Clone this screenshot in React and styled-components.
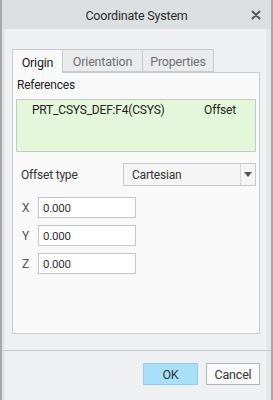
import React from "react";
import styled, { createGlobalStyle } from "styled-components";

const Global = createGlobalStyle`
  html, body { margin: 0; padding: 0; background: #eef0f1; }
  body { font-family: Roboto, "Open Sans", sans-serif; font-size: 12px; letter-spacing: -0.2px; color: #222; }
  * { box-sizing: border-box; }
`;

const Frame = styled.div`
  width: 273px;
  height: 400px;
  display: flex;
  flex-direction: column;
  background: #eef0f1;
  border-left: 2px solid #a6a8a9;
  border-right: 2px solid #a6a8a9;
  box-shadow: inset 3px 0 0 #e4e6e7, inset -5px 0 0 #e4e6e7;
`;

const TitleBar = styled.div`
  height: 29px;
  flex: none;
  display: flex;
  align-items: center;
  justify-content: center;
  position: relative;
  background: #dcdfe0;
  font-size: 12.5px;
  color: #2a2a2a;
  padding-top: 1px;
`;

const Close = styled.span`
  position: absolute;
  right: 8px;
  top: 8px;
  width: 14px;
  height: 14px;
  display: flex;
  align-items: center;
  justify-content: center;
`;

const Body = styled.div`
  flex: 1;
  display: flex;
  flex-direction: column;
  padding: 20px 11px 0 10px;
`;

const Tabs = styled.div`
  display: flex;
  height: 23px;
  position: relative;
  z-index: 1;
`;

const Tab = styled.div`
  width: ${(p) => p.$w}px;
  height: ${(p) => (p.$active ? "24px" : "23px")};
  display: flex;
  align-items: center;
  justify-content: center;
  padding-top: 1px;
  border: 1px solid #c9cbcc;
  border-bottom: ${(p) => (p.$active ? "none" : "1px solid #c9cbcc")};
  border-left: ${(p) => (p.$first ? "1px solid #c9cbcc" : "none")};
  background: ${(p) => (p.$active ? "#f9f9f9" : "#e9ebec")};
  color: ${(p) => (p.$active ? "#222" : "#707070")};
  font-size: 12.5px;
`;

const Panel = styled.div`
  height: 262px;
  border: 1px solid #c9cbcc;
  background: #f9f9f9;
  padding: 5px 3px 0 3px;
  display: flex;
  flex-direction: column;
`;

const SectionLabel = styled.div`
  height: 18px;
  padding-left: 1px;
  color: #222;
`;

const RefBox = styled.div`
  margin-top: 3px;
  height: 53px;
  border: 1px solid #c5c8c6;
  background: #e5f7db;
  display: flex;
  justify-content: space-between;
  padding: 3px 19px 0 15px;
  color: #222;
`;

const FieldRow = styled.div`
  display: flex;
  align-items: center;
  justify-content: space-between;
  margin-top: 11px;
  padding-left: 5px;
`;

const Label = styled.span`
  color: #333;
`;

const Select = styled.div`
  width: 133px;
  height: 23px;
  border: 1px solid #c5c7c8;
  background: #f5f5f5;
  display: flex;
  align-items: stretch;
`;

const SelectText = styled.div`
  flex: 1;
  display: flex;
  align-items: center;
  padding-left: 8px;
  color: #333;
`;

const SelectArrow = styled.div`
  width: 15px;
  border-left: 1px solid #d5d7d8;
  display: flex;
  align-items: center;
  justify-content: center;
`;

const Coords = styled.div`
  display: flex;
  flex-direction: column;
  gap: 7px;
  margin-top: 11px;
  padding-left: 6px;
`;

const CoordRow = styled.div`
  display: flex;
  align-items: center;
  height: 21px;
`;

const CoordLabel = styled.span`
  width: 16px;
  color: #555;
`;

const Input = styled.div`
  width: 98px;
  height: 21px;
  border: 1px solid #c2c4c5;
  background: #ffffff;
  display: flex;
  align-items: center;
  padding-left: 4px;
  font-size: 11.5px;
  color: #333;
`;

const Footer = styled.div`
  margin-top: 16px;
  border-top: 1px solid #c7c9ca;
  margin-left: -10px;
  margin-right: -11px;
  padding: 12px 11px 0 0;
  display: flex;
  justify-content: flex-end;
  gap: 8px;
`;

const Button = styled.div`
  width: ${(p) => p.$w}px;
  height: 22px;
  display: flex;
  align-items: center;
  justify-content: center;
  font-size: 12.5px;
  color: #333;
  background: ${(p) => (p.$primary ? "#a9e0f9" : "#fbfbfb")};
  border: 1px solid ${(p) => (p.$primary ? "#8fcdee" : "#b2b4b5")};
`;

export default function App() {
  return (
    <>
      <Global />
      <Frame>
        <TitleBar>
          Coordinate System
          <Close>
            <svg width="10" height="10" viewBox="0 0 10 10">
              <path d="M1.5 1.5 L8.5 8.5 M8.5 1.5 L1.5 8.5" stroke="#5a5a5a" strokeWidth="2" strokeLinecap="round" />
            </svg>
          </Close>
        </TitleBar>
        <Body>
          <Tabs>
            <Tab $active $first $w={51}>Origin</Tab>
            <Tab $w={80}>Orientation</Tab>
            <Tab $w={71}>Properties</Tab>
          </Tabs>
          <Panel>
            <SectionLabel>References</SectionLabel>
            <RefBox>
              <span>PRT_CSYS_DEF:F4(CSYS)</span>
              <span>Offset</span>
            </RefBox>
            <FieldRow>
              <Label>Offset type</Label>
              <Select>
                <SelectText>Cartesian</SelectText>
                <SelectArrow>
                  <svg width="8" height="5" viewBox="0 0 8 5">
                    <path d="M0 0 L8 0 L4 5 Z" fill="#555" />
                  </svg>
                </SelectArrow>
              </Select>
            </FieldRow>
            <Coords>
              {["X", "Y", "Z"].map((c) => (
                <CoordRow key={c}>
                  <CoordLabel>{c}</CoordLabel>
                  <Input>0.000</Input>
                </CoordRow>
              ))}
            </Coords>
          </Panel>
          <Footer>
            <Button $primary $w={55}>OK</Button>
            <Button $w={54}>Cancel</Button>
          </Footer>
        </Body>
      </Frame>
    </>
  );
}
